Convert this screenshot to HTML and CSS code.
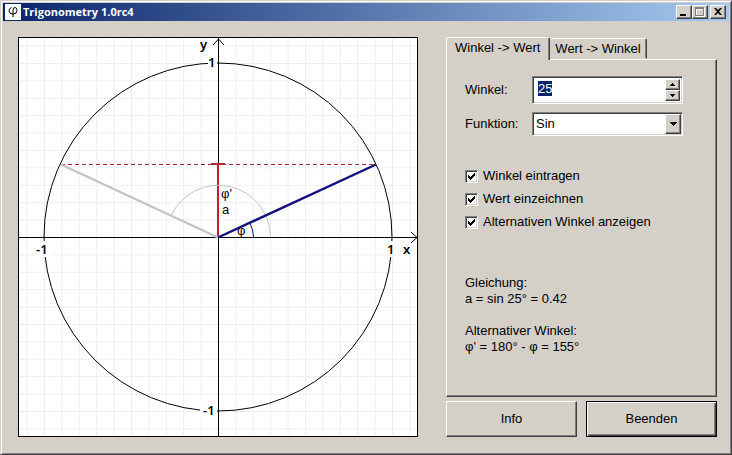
FILE: index.html
```
<!DOCTYPE html>
<html lang="de">
<head>
  <meta charset="UTF-8" />
  <meta name="viewport" content="width=device-width, initial-scale=1.0"/>
  <title>Trigonometry 1.0rc4</title>
  <link rel="stylesheet" href="styles.css">
</head>
<body>
  <div class="window">
    <header class="titlebar">
      <span class="app-icon">
        <svg width="16" height="16" viewBox="0 0 16 16">
          <path d="M6.5 3.5Q4 4.5 4 7Q4 10 8 10Q12 10 12 6.5Q12 3.5 10 3.5Q8 3.5 8 6V13" fill="none" stroke="#000"/>
        </svg>
      </span>
      <h1>Trigonometry 1.0rc4</h1>
      <div class="window-buttons">
        <button type="button" class="raised" aria-label="Minimieren">
          <svg width="12" height="10" viewBox="0 0 12 10"><path d="M2 7h6v2H2z"/></svg>
        </button>
        <button type="button" class="raised" aria-label="Maximieren" disabled>
          <svg width="12" height="10" viewBox="0 0 12 10">
            <path d="M2 1h9v9H2zM3 3v6h7V3z" fill="#fff" fill-rule="evenodd"/>
            <path d="M1 0h9v9H1zM2 2v6h7V2z" fill="#808080" fill-rule="evenodd"/>
          </svg>
        </button>
        <button type="button" class="raised close" aria-label="Schließen">
          <svg width="12" height="10" viewBox="0 0 12 10"><path d="M2 1h2l2 2 2-2h2L7 4.500 10 8H8L6 6 4 8H2l3-3.500z"/></svg>
        </button>
      </div>
    </header>

    <main class="content">
      <svg class="plot" viewBox="0 0 400 400" role="img" aria-label="Einheitskreis">
        <defs>
          <pattern id="grid" x="8.6" y="8.6" width="17.4" height="17.4" patternUnits="userSpaceOnUse">
            <path d="M0.5 0V17.4M0 0.5H17.4" stroke="#eee" fill="none"/>
          </pattern>
        </defs>
        <rect width="400" height="400" fill="#fff"/>
        <rect width="400" height="400" fill="url(#grid)"/>

        <!-- unit circle -->
        <circle class="line" cx="200" cy="200" r="174"/>

        <!-- gaps for the scale labels -->
        <g fill="#fff">
          <rect x="190" y="18" width="9" height="16"/>
          <rect x="182" y="365" width="17" height="16"/>
          <rect x="17" y="204" width="16" height="16"/>
          <rect x="369" y="204" width="10" height="16"/>
        </g>

        <!-- axes -->
        <path class="line crisp" d="M200.5 0V400M0 200.5H400"/>
        <path class="line" d="M195 8L200.5 2L206 8M393 195L399 200.5L393 206"/>

        <!-- value on the y axis -->
        <path d="M43 127.500H357" stroke="#a82830" stroke-dasharray="4 3" class="crisp"/>
        <path d="M200 127V199" stroke="#c8202a" stroke-width="2"/>
        <path d="M193 127H207" stroke="#b02830" stroke-width="2"/>

        <!-- angles -->
        <path d="M252.5 200A52 52 0 0 0 153.500 178" fill="none" stroke="#c4c4c4"/>
        <path d="M235.5 200A35 35 0 0 0 232 186" fill="none" stroke="#101080"/>
        <path d="M200 200.5L43 127.5" stroke="#c4c4c4" stroke-width="2.4"/>
        <path d="M200 200.5L358 127.5" stroke="#101080" stroke-width="2.4"/>

        <g class="scale">
          <text x="182" y="12">y</text>
          <text x="385" y="217">x</text>
          <text x="190" y="30">1</text>
          <text x="185" y="378">-1</text>
          <text x="18" y="217">-1</text>
          <text x="369" y="217">1</text>
        </g>
        <g class="names">
          <text x="203" y="161">φ'</text>
          <text x="204" y="177">a</text>
          <text x="219" y="198">φ</text>
        </g>
        <rect class="line crisp" x="0.5" y="0.5" width="399" height="399"/>
      </svg>

      <div class="side">
        <div class="tabs" role="tablist">
          <button type="button" class="tab active" role="tab" id="tab-wert" aria-selected="true" aria-controls="panel">Winkel -&gt; Wert</button>
          <button type="button" class="tab" role="tab" aria-selected="false">Wert -&gt; Winkel</button>
        </div>

        <form class="panel" id="panel" role="tabpanel" aria-labelledby="tab-wert">
          <div class="field">
            <label for="winkel">Winkel:</label>
            <div class="box spinner">
              <input type="text" id="winkel" value="25" autocomplete="off">
              <div class="spin-buttons">
                <button type="button" class="raised" aria-label="Mehr"><svg width="5" height="3" viewBox="0 0 5 3"><path d="M2 0h1v1h1v1h1v1H0V2h1V1h1z"/></svg></button>
                <button type="button" class="raised" aria-label="Weniger"><svg width="5" height="3" viewBox="0 0 5 3"><path d="M0 0h5v1H4v1H3v1H2V2H1V1H0z"/></svg></button>
              </div>
            </div>
          </div>
          <div class="field">
            <label for="funktion">Funktion:</label>
            <div class="box dropdown">
              <select id="funktion">
                <option>Sin</option>
                <option>Cos</option>
                <option>Tan</option>
              </select>
              <span class="raised arrow"><svg width="7" height="4" viewBox="0 0 7 4"><path d="M0 0h7v1H6v1H5v1H4v1H3V3H2V2H1V1H0z"/></svg></span>
            </div>
          </div>

          <div class="options">
            <label><input type="checkbox" checked> Winkel eintragen</label>
            <label><input type="checkbox" checked> Wert einzeichnen</label>
            <label><input type="checkbox" checked> Alternativen Winkel anzeigen</label>
          </div>

          <div class="results">
            <p>Gleichung:<br>a = sin 25° = 0.42</p>
            <p>Alternativer Winkel:<br>φ' = 180° - φ = 155°</p>
          </div>
        </form>

        <div class="actions">
          <button type="button" class="push">Info</button>
          <button type="button" class="push default">Beenden</button>
        </div>
      </div>
    </main>
  </div>

  <script>
    // Start with the angle selected so it can be typed over
    const angle = document.querySelector("#winkel");
    angle.focus();
    angle.select();
  </script>
</body>
</html>
```
FILE: styles.css
```
* {
  box-sizing: border-box;
}

body {
  margin: 0;
  background: #d4d0c8;
  color: #000;
  font: 13px/16px "Liberation Sans", Arial, sans-serif;
}

button, input, select {
  font: inherit;
  color: inherit;
  margin: 0;
  padding: 0;
  outline: none;
}

button {
  background: #d4d0c8;
}

svg {
  display: block;
}

.window {
  min-height: 100vh;
  padding: 1px;
  border: 1px solid;
  border-color: #d4d0c8 #404040 #404040 #d4d0c8;
  box-shadow: inset 1px 1px #fff, inset -1px -1px #808080;
}

/* 3D edges */
.raised {
  display: flex;
  align-items: center;
  justify-content: center;
  background: #d4d0c8;
  border: 1px solid;
  border-color: #fff #404040 #404040 #fff;
  box-shadow: inset -1px -1px #808080;
}

.box {
  flex: 1;
  min-width: 0;
  background: #fff;
  border: 1px solid;
  border-color: #808080 #fff #fff #808080;
  box-shadow: inset 1px 1px #404040, inset -1px -1px #d4d0c8;
  padding: 2px;
}

/* Title bar */
.titlebar {
  display: flex;
  align-items: center;
  height: 18px;
  margin: 1px;
  padding: 0 3px 0 2px;
  background: linear-gradient(to right, #0a246a, #a6caf0);
}

.app-icon {
  background: #fff;
}

h1 {
  flex: 1;
  margin: 0;
  padding-left: 2px;
  color: #fff;
  font: bold 11px/16px "Open Sans", Tahoma, sans-serif;
}

.window-buttons {
  display: flex;
}

.window-buttons button {
  width: 16px;
  height: 14px;
}

.window-buttons .close {
  margin-left: 2px;
}

/* Main area */
.content {
  display: flex;
  align-items: stretch;
  gap: 28px;
  padding: 15px 13px 15px 16px;
}

.plot {
  flex: 400;
  min-width: 0;
  aspect-ratio: 1;
}

.line {
  fill: none;
  stroke: #000;
}

.crisp {
  shape-rendering: crispEdges;
}

.scale {
  font: 600 13px "Noto Sans", Tahoma, sans-serif;
}

.names {
  font: 13px "Liberation Sans", Arial, sans-serif;
}

.side {
  flex: 271;
  min-width: 0;
  display: flex;
  flex-direction: column;
}

.tabs {
  display: flex;
  align-items: flex-end;
}

.tab {
  height: 21px;
  padding: 0 5px 0 4px;
  border: 1px solid;
  border-color: #fff #404040 transparent transparent;
  border-radius: 2px 2px 0 0;
  box-shadow: inset -1px 0 #808080;
  white-space: nowrap;
}

.tab.active {
  position: relative;
  height: 23px;
  margin-bottom: -1px;
  padding: 0 9px 2px 8px;
  border-left-color: #fff;
  border-bottom: 0;
}

.panel {
  flex: 1;
  padding: 16px 33px 16px 18px;
  border: 1px solid;
  border-color: #fff #404040 #404040 #fff;
  box-shadow: inset -1px -1px #808080;
}

.field {
  display: flex;
  align-items: center;
  margin-bottom: 8px;
}

.field label {
  width: 67px;
}

.spinner {
  display: flex;
  height: 28px;
}

.spinner input {
  flex: 1;
  min-width: 0;
  height: 18px;
  padding-left: 3px;
  border: 0;
  background: #fff;
}

.spinner input::selection {
  background: #0a246a;
  color: #fff;
}

.spin-buttons {
  display: grid;
  grid-template-rows: 1fr 1fr;
  width: 15px;
}

.dropdown {
  display: grid;
  grid-template-columns: 1fr 16px;
  height: 24px;
  padding: 1px;
}

.dropdown select {
  grid-area: 1 / 1 / 2 / 3;
  appearance: none;
  border: 0;
  padding-left: 2px;
  background: transparent;
}

.arrow {
  grid-area: 1 / 2;
  pointer-events: none;
}

.options {
  display: grid;
  gap: 7px;
  margin-top: 32px;
}

.options label {
  display: flex;
  align-items: center;
  gap: 5px;
}

.options input {
  appearance: none;
  width: 13px;
  height: 13px;
  background: #fff;
  border: 1px solid;
  border-color: #808080 #fff #fff #808080;
  box-shadow: inset 1px 1px #404040, inset -1px -1px #d4d0c8;
}

.options input:checked {
  background: #fff url("data:image/svg+xml,%3Csvg xmlns='http://www.w3.org/2000/svg' width='7' height='7'%3E%3Cpath d='M0 2v3l2 2 5-5V0h-1L2 4z' shape-rendering='crispEdges'/%3E%3C/svg%3E") center no-repeat;
}

.results {
  margin-top: 45px;
}

.results p {
  margin: 0 0 16px;
}

/* Bottom buttons */
.actions {
  display: flex;
  gap: 9px;
  margin-top: 4px;
}

.push {
  flex: 1;
  height: 36px;
  border: 1px solid;
  border-color: #fff #404040 #404040 #fff;
  box-shadow: inset -1px -1px #808080;
}

.push.default {
  border-color: #000;
  box-shadow: inset 1px 1px #fff, inset -1px -1px #404040, inset -2px -2px #808080;
}
```
